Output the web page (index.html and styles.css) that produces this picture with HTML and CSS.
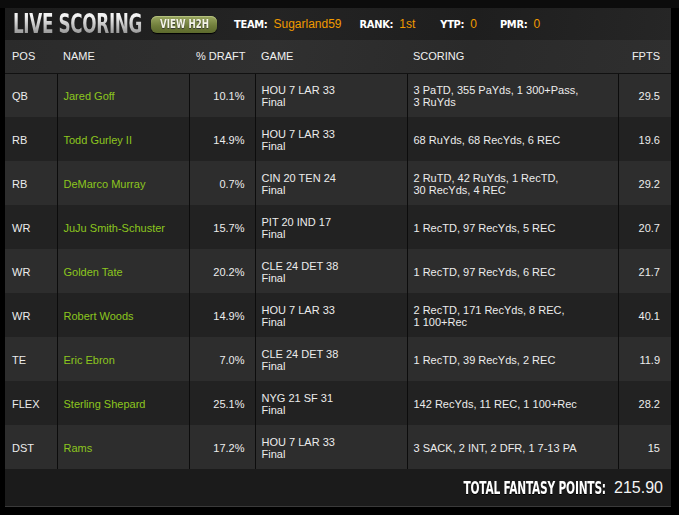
FILE: index.html
```html
<!DOCTYPE html>
<html>
<head>
<meta charset="utf-8">
<link rel="stylesheet" href="styles.css">
</head>
<body>
<div class="panel">
  <div class="topbar">
    <div class="title-box"><h1 class="title">LIVE SCORING</h1></div>
    <span class="btn"><span class="btn-text">VIEW H2H</span></span>
    <span class="stat team"><b>TEAM:</b><span>Sugarland59</span></span>
    <span class="stat rank"><b>RANK:</b><span>1st</span></span>
    <span class="stat ytp"><b>YTP:</b><span>0</span></span>
    <span class="stat pmr"><b>PMR:</b><span>0</span></span>
  </div>
  <table class="grid">
    <colgroup>
      <col class="c-pos"><col class="c-name"><col class="c-draft"><col class="c-game"><col class="c-score"><col class="c-fpts">
    </colgroup>
    <thead>
      <tr><th>POS</th><th>NAME</th><th class="draft">% DRAFT</th><th>GAME</th><th>SCORING</th><th class="num">FPTS</th></tr>
    </thead>
    <tbody>
      <tr><td>QB</td><td class="name">Jared Goff</td><td class="num">10.1%</td><td>HOU 7 LAR 33<br>Final</td><td>3 PaTD, 355 PaYds, 1 300+Pass,<br>3 RuYds</td><td class="num">29.5</td></tr>
      <tr><td>RB</td><td class="name">Todd Gurley II</td><td class="num">14.9%</td><td>HOU 7 LAR 33<br>Final</td><td>68 RuYds, 68 RecYds, 6 REC</td><td class="num">19.6</td></tr>
      <tr><td>RB</td><td class="name">DeMarco Murray</td><td class="num">0.7%</td><td>CIN 20 TEN 24<br>Final</td><td>2 RuTD, 42 RuYds, 1 RecTD,<br>30 RecYds, 4 REC</td><td class="num">29.2</td></tr>
      <tr><td>WR</td><td class="name">JuJu Smith-Schuster</td><td class="num">15.7%</td><td>PIT 20 IND 17<br>Final</td><td>1 RecTD, 97 RecYds, 5 REC</td><td class="num">20.7</td></tr>
      <tr><td>WR</td><td class="name">Golden Tate</td><td class="num">20.2%</td><td>CLE 24 DET 38<br>Final</td><td>1 RecTD, 97 RecYds, 6 REC</td><td class="num">21.7</td></tr>
      <tr><td>WR</td><td class="name">Robert Woods</td><td class="num">14.9%</td><td>HOU 7 LAR 33<br>Final</td><td>2 RecTD, 171 RecYds, 8 REC,<br>1 100+Rec</td><td class="num">40.1</td></tr>
      <tr><td>TE</td><td class="name">Eric Ebron</td><td class="num">7.0%</td><td>CLE 24 DET 38<br>Final</td><td>1 RecTD, 39 RecYds, 2 REC</td><td class="num">11.9</td></tr>
      <tr><td>FLEX</td><td class="name">Sterling Shepard</td><td class="num">25.1%</td><td>NYG 21 SF 31<br>Final</td><td>142 RecYds, 11 REC, 1 100+Rec</td><td class="num">28.2</td></tr>
      <tr><td>DST</td><td class="name">Rams</td><td class="num">17.2%</td><td>HOU 7 LAR 33<br>Final</td><td>3 SACK, 2 INT, 2 DFR, 1 7-13 PA</td><td class="num">15</td></tr>
    </tbody>
  </table>
  <div class="footer">
    <span class="total-box"><span class="total-label">TOTAL FANTASY POINTS:</span></span>
    <span class="total-value">215.90</span>
  </div>
</div>
</body>
</html>
```
FILE: styles.css
```css
html, body {
  margin: 0;
  padding: 0;
  background: #000;
}
body {
  background: linear-gradient(#0c0c0c 0, #0c0c0c 8px, #000 8px);
  font-family: "Liberation Sans", Arial, sans-serif;
  font-size: 11px;
  color: #ececec;
  height: 515px;
  overflow: hidden;
}
.panel {
  margin: 8px 0 0 5px;
  width: 666px;
  background: #1b1b1b;
  border-bottom: 1px solid #3a3a3a;
}
.topbar {
  height: 32px;
  display: flex;
  align-items: center;
  background: linear-gradient(100deg, #1c1c1c, #242424 40%, #1e1e1e 70%, #262626);
}
.title-box {
  width: 130px;
  margin-left: 8px;
  height: 32px;
  overflow: visible;
}
.title {
  display: inline-block;
  margin: 0;
  font-family: "DejaVu Sans Condensed", sans-serif;
  font-weight: bold;
  font-size: 26px;
  line-height: 32px;
  letter-spacing: -0.5px;
  background: linear-gradient(#f4f4f4 25%, #8e8e8e 85%);
  -webkit-background-clip: text;
  background-clip: text;
  color: transparent;
  transform: scaleX(0.72);
  transform-origin: left center;
  white-space: nowrap;
}
.btn {
  margin-left: 8px;
  width: 66px;
  height: 17px;
  border-radius: 6px;
  background: linear-gradient(#9aa761, #6f7c3a 60%, #5d6a2d);
  box-shadow: inset 0 1px 0 #b3bf7c, 0 1px 1px #000;
  display: flex;
  justify-content: center;
  overflow: hidden;
}
.btn-text {
  display: inline-block;
  color: #f4f4e8;
  font-family: "DejaVu Sans Condensed", sans-serif;
  font-weight: bold;
  font-size: 12px;
  line-height: 17px;
  white-space: nowrap;
  text-shadow: 0 1px 1px #333;
  transform: scaleX(0.8);
}
.stat {
  display: flex;
  align-items: baseline;
  gap: 6px;
  white-space: nowrap;
}
.stat b {
  font-family: "DejaVu Sans Condensed", sans-serif;
  font-weight: bold;
  font-size: 11px;
  color: #fff;
  display: inline-block;
  letter-spacing: -0.3px;
}
.stat span {
  color: #f09a00;
  font-size: 12px;
}
.team { margin-left: 17px; }
.rank { margin-left: 18px; }
.ytp { margin-left: 25px; }
.pmr { margin-left: 23px; }
.grid {
  width: 666px;
  border-collapse: collapse;
  table-layout: fixed;
}
.c-pos { width: 52px; }
.c-name { width: 132px; }
.c-draft { width: 66px; }
.c-game { width: 152px; }
.c-score { width: 211px; }
.c-fpts { width: 53px; }
thead tr {
  height: 33px;
  background: linear-gradient(100deg, #2b2b2b, #303030 40%, #2a2a2a 70%, #2f2f2f);
}
th {
  font-weight: normal;
  text-align: left;
  padding: 0 0 0 6px;
  font-size: 11px;
  color: #f0f0f0;
  border-bottom: 1px solid #111;
  white-space: nowrap;
}
th:first-child { padding-left: 7px; }
th.draft { padding-left: 7px; }
th.num { padding: 0 11px 0 0; text-align: right; }
tbody tr { height: 44px; }
tbody tr:nth-child(odd) { background: #2d2d2d; }
tbody tr:nth-child(even) { background: #222; }
td {
  padding: 1px 0 0 6px;
  line-height: 12px;
  vertical-align: middle;
  border-left: 1px solid #0c0c0c;
}
td:first-child { border-left: none; padding-left: 7px; }
td.name { color: #8cc61e; padding-left: 6px; }
td.num { text-align: right; padding-right: 10px; padding-left: 0; }
td:last-child { padding-right: 11px; }
.footer {
  height: 37px;
  display: flex;
  align-items: center;
  justify-content: flex-end;
  padding-right: 8px;
  gap: 8px;
  background: #1b1b1b;
}
.total-box {
  width: 143px;
  display: flex;
  justify-content: flex-end;
  overflow: visible;
}
.total-label {
  display: inline-block;
  font-family: "DejaVu Sans Condensed", sans-serif;
  font-weight: bold;
  font-size: 17px;
  color: #fff;
  white-space: nowrap;
  letter-spacing: -0.3px;
  text-shadow: 0 1px 0 #000;
  transform: scaleX(0.695);
  transform-origin: right center;
}
.total-value {
  font-size: 16px;
  color: #f4f4f4;
}
```
